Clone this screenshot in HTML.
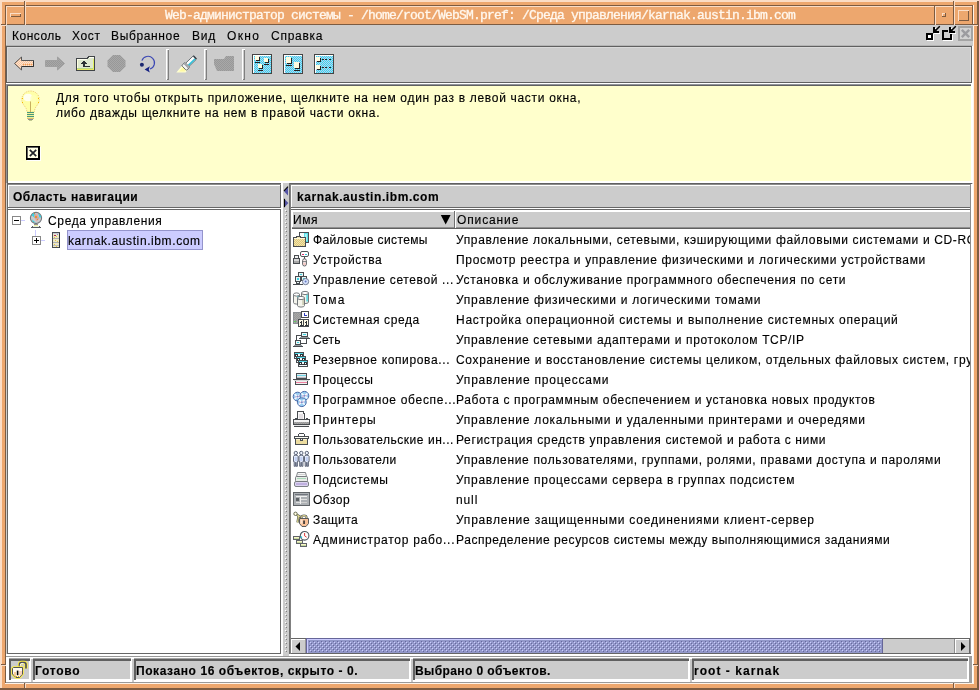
<!DOCTYPE html>
<html><head><meta charset="utf-8"><title>WebSM</title>
<style>
html,body{margin:0;padding:0}
body{width:979px;height:690px;overflow:hidden;position:relative;background:#eda76e;font-family:"Liberation Sans", sans-serif;font-size:12px}
#w{position:absolute;left:0;top:0;width:979px;height:690px;overflow:hidden;will-change:transform;transform:translateZ(0)}
#w>div,#w>svg{position:absolute}
.title{text-align:center;font-family:"Liberation Mono", monospace;font-size:13px;letter-spacing:-0.8px;line-height:17px;color:#fffaf3;-webkit-text-stroke:0.35px #fff3e6;white-space:nowrap;overflow:hidden}
.t{white-space:pre;line-height:17px;height:17px;-webkit-text-stroke:0.14px #000;font-family:"Liberation Sans", sans-serif;font-size:12px}
</style></head><body><div id="w">
<div style="left:0px;top:0px;width:979px;height:690px;background:#eda76e;"></div><div style="left:0px;top:0px;width:979px;height:2px;background:#fbddc6;"></div><div style="left:0px;top:0px;width:2px;height:690px;background:#fbddc6;"></div><div style="left:0px;top:688px;width:979px;height:2px;background:#7c5b41;"></div><div style="left:977px;top:0px;width:2px;height:690px;background:#7c5b41;"></div><div style="left:977px;top:0px;width:2px;height:1px;background:#fbddc6;"></div><div style="left:5px;top:5px;width:969px;height:1px;background:#7c5b41;"></div><div style="left:5px;top:5px;width:1px;height:679px;background:#7c5b41;"></div><div style="left:5px;top:683px;width:969px;height:1px;background:#fff3e8;"></div><div style="left:973px;top:5px;width:1px;height:679px;background:#fff3e8;"></div><div style="left:1px;top:24px;width:5px;height:1px;background:#7c5b41;"></div><div style="left:1px;top:25px;width:5px;height:1px;background:#fbddc6;"></div><div style="left:973px;top:24px;width:5px;height:1px;background:#7c5b41;"></div><div style="left:973px;top:25px;width:5px;height:1px;background:#fbddc6;"></div><div style="left:1px;top:664px;width:5px;height:1px;background:#7c5b41;"></div><div style="left:1px;top:665px;width:5px;height:1px;background:#fbddc6;"></div><div style="left:973px;top:664px;width:5px;height:1px;background:#7c5b41;"></div><div style="left:973px;top:665px;width:5px;height:1px;background:#fbddc6;"></div><div style="left:24px;top:1px;width:1px;height:5px;background:#7c5b41;"></div><div style="left:25px;top:1px;width:1px;height:5px;background:#fbddc6;"></div><div style="left:24px;top:683px;width:1px;height:5px;background:#7c5b41;"></div><div style="left:25px;top:683px;width:1px;height:5px;background:#fbddc6;"></div><div style="left:953px;top:1px;width:1px;height:5px;background:#7c5b41;"></div><div style="left:954px;top:1px;width:1px;height:5px;background:#fbddc6;"></div><div style="left:953px;top:683px;width:1px;height:5px;background:#7c5b41;"></div><div style="left:954px;top:683px;width:1px;height:5px;background:#fbddc6;"></div><div style="left:6px;top:6px;width:967px;height:1px;background:#fbddc6;"></div><div style="left:6px;top:24px;width:967px;height:1px;background:#7c5b41;"></div><div style="left:6px;top:6px;width:1px;height:19px;background:#fbddc6;"></div><div style="left:24px;top:6px;width:1px;height:19px;background:#7c5b41;"></div><div style="left:10px;top:13px;width:11px;height:1px;background:#fbddc6;"></div><div style="left:10px;top:13px;width:1px;height:4px;background:#fbddc6;"></div><div style="left:11px;top:16px;width:10px;height:1px;background:#7c5b41;"></div><div style="left:20px;top:14px;width:1px;height:3px;background:#7c5b41;"></div><div style="left:25px;top:6px;width:1px;height:19px;background:#fbddc6;"></div><div style="left:934px;top:6px;width:1px;height:19px;background:#7c5b41;"></div><div style="left:935px;top:6px;width:1px;height:19px;background:#fbddc6;"></div><div style="left:953px;top:6px;width:1px;height:19px;background:#7c5b41;"></div><div style="left:942px;top:13px;width:4px;height:1px;background:#fbddc6;"></div><div style="left:942px;top:13px;width:1px;height:4px;background:#fbddc6;"></div><div style="left:942px;top:16px;width:4px;height:1px;background:#7c5b41;"></div><div style="left:945px;top:13px;width:1px;height:4px;background:#7c5b41;"></div><div style="left:954px;top:6px;width:1px;height:19px;background:#fbddc6;"></div><div style="left:972px;top:6px;width:1px;height:19px;background:#7c5b41;"></div><div style="left:958px;top:10px;width:11px;height:1px;background:#fbddc6;"></div><div style="left:958px;top:10px;width:1px;height:11px;background:#fbddc6;"></div><div style="left:959px;top:20px;width:10px;height:1px;background:#7c5b41;"></div><div style="left:968px;top:11px;width:1px;height:10px;background:#7c5b41;"></div><div class="title" style="left:26px;top:7px;width:908px;height:17px">Web-администратор системы - /home/root/WebSM.pref: /Среда управления/karnak.austin.ibm.com</div><div style="left:6px;top:25px;width:967px;height:658px;background:#cccccc;"></div><div style="left:6px;top:45px;width:966px;height:1px;background:#b4b4b4;"></div><div style="left:6px;top:46px;width:966px;height:1px;background:#606060;"></div><div style="left:6px;top:25px;width:1px;height:20px;background:#d8d8d8;"></div><div class="t" style="left:12px;top:28px;font-weight:normal;color:#000;letter-spacing:0.501px;">Консоль</div><div class="t" style="left:72px;top:28px;font-weight:normal;color:#000;letter-spacing:0.663px;">Хост</div><div class="t" style="left:111px;top:28px;font-weight:normal;color:#000;letter-spacing:0.639px;">Выбранное</div><div class="t" style="left:192px;top:28px;font-weight:normal;color:#000;letter-spacing:0.827px;">Вид</div><div class="t" style="left:227px;top:28px;font-weight:normal;color:#000;letter-spacing:1.327px;">Окно</div><div class="t" style="left:271px;top:28px;font-weight:normal;color:#000;letter-spacing:0.732px;">Справка</div><svg style="left:920px;top:25px" width="54" height="20" viewBox="920 25 54 20" ><g shape-rendering="crispEdges"><rect x="927" y="34" width="7" height="7" fill="#fff"/><rect x="926" y="33" width="7" height="7" fill="#000"/><rect x="928" y="35" width="3" height="3" fill="#fff"/><rect x="943" y="40" width="10" height="1" fill="#fff"/><rect x="952" y="35" width="1" height="6" fill="#fff"/><rect x="942" y="30" width="6" height="2" fill="#000"/><rect x="942" y="30" width="2" height="10" fill="#000"/><rect x="942" y="38" width="10" height="2" fill="#000"/><rect x="950" y="34" width="2" height="6" fill="#000"/><rect x="934" y="33" width="6" height="1" fill="#fff"/><rect x="935" y="28" width="1" height="1" fill="#fff"/><rect x="933" y="27" width="2" height="6" fill="#000"/><rect x="933" y="31" width="6" height="2" fill="#000"/><rect x="935" y="29" width="1" height="2" fill="#606060"/><rect x="936" y="30" width="1" height="1" fill="#606060"/><rect x="950" y="33" width="6" height="1" fill="#fff"/><rect x="951" y="28" width="1" height="1" fill="#fff"/><rect x="949" y="27" width="2" height="6" fill="#000"/><rect x="949" y="31" width="6" height="2" fill="#000"/><rect x="951" y="29" width="1" height="2" fill="#606060"/><rect x="952" y="30" width="1" height="1" fill="#606060"/></g><path d="M935 31 L939.8 26.2" stroke="#000" stroke-width="1.5"/><path d="M951 31 L955.8 26.2" stroke="#000" stroke-width="1.5"/><g shape-rendering="crispEdges"><rect x="958" y="26" width="15" height="15" fill="#a4a4a4"/><rect x="960" y="28" width="11" height="11" fill="#d2d2d2"/></g><path d="M961.8 29.8 L969.2 37.2 M969.2 29.8 L961.8 37.2" stroke="#9c9ca0" stroke-width="2.4"/></svg><div style="left:6px;top:47px;width:1px;height:36px;background:#606060;"></div><div style="left:7px;top:47px;width:964px;height:1px;background:#dadada;"></div><div style="left:7px;top:48px;width:1px;height:34px;background:#dadada;"></div><div style="left:970px;top:48px;width:1px;height:34px;background:#dadada;"></div><div style="left:971px;top:47px;width:1px;height:36px;background:#606060;"></div><div style="left:972px;top:46px;width:1px;height:38px;background:#ffffff;"></div><div style="left:7px;top:82px;width:965px;height:1px;background:#606060;"></div><div style="left:6px;top:83px;width:967px;height:1px;background:#ffffff;"></div><div style="left:166px;top:49px;width:1px;height:31px;background:#ffffff;"></div><div style="left:166px;top:49px;width:3px;height:1px;background:#ffffff;"></div><div style="left:168px;top:50px;width:1px;height:30px;background:#808080;"></div><div style="left:167px;top:79px;width:2px;height:1px;background:#808080;"></div><div style="left:204px;top:49px;width:1px;height:31px;background:#ffffff;"></div><div style="left:204px;top:49px;width:3px;height:1px;background:#ffffff;"></div><div style="left:206px;top:50px;width:1px;height:30px;background:#808080;"></div><div style="left:205px;top:79px;width:2px;height:1px;background:#808080;"></div><div style="left:242px;top:49px;width:1px;height:31px;background:#ffffff;"></div><div style="left:242px;top:49px;width:3px;height:1px;background:#ffffff;"></div><div style="left:244px;top:50px;width:1px;height:30px;background:#808080;"></div><div style="left:243px;top:79px;width:2px;height:1px;background:#808080;"></div><svg style="left:6px;top:47px" width="340" height="35" viewBox="6 47 340 35" ><defs>
<pattern id="dCy" width="2" height="2" patternUnits="userSpaceOnUse"><rect width="2" height="2" fill="#c4c8f0"/><rect width="1" height="1" fill="#2ce0ee"/><rect x="1" y="1" width="1" height="1" fill="#2ce0ee"/></pattern>
<pattern id="dGr" width="2" height="2" patternUnits="userSpaceOnUse"><rect width="2" height="2" fill="#a8a8a8"/><rect width="1" height="1" fill="#989898"/><rect x="1" y="1" width="1" height="1" fill="#989898"/></pattern>
<pattern id="dPe" width="2" height="2" patternUnits="userSpaceOnUse"><rect width="2" height="2" fill="#fde3cf"/><rect width="1" height="1" fill="#f8c49c"/><rect x="1" y="1" width="1" height="1" fill="#f8c49c"/></pattern>
<pattern id="dTh" width="4" height="4" patternUnits="userSpaceOnUse"><rect width="4" height="4" fill="#9399ca"/><rect x="0" y="0" width="1" height="1" fill="#ccccff"/><rect x="2" y="2" width="1" height="1" fill="#ccccff"/><rect x="1" y="1" width="1" height="1" fill="#6868a0"/><rect x="3" y="3" width="1" height="1" fill="#6868a0"/></pattern>
<pattern id="dFo" width="2" height="2" patternUnits="userSpaceOnUse"><rect width="2" height="2" fill="#f0e4b0"/><rect width="1" height="1" fill="#e0c878"/><rect x="1" y="1" width="1" height="1" fill="#e0c878"/></pattern>
</defs><path d="M14.5 63.5 L21.5 57 V60.5 H33.5 V66.5 H21.5 V70 Z" fill="url(#dPe)" stroke="#555" stroke-width="1" stroke-linejoin="miter"/><path d="M22 66.5 H33.5 V60.5" fill="none" stroke="#333" stroke-width="1"/><path d="M23 64.5 H32" stroke="#f59a4a" stroke-width="1" stroke-dasharray="1 1"/><path d="M64.5 63.5 L57.5 57 V60.5 H45.5 V66.5 H57.5 V70 Z" fill="url(#dGr)" stroke="#a0a0a0" stroke-width="1"/><g shape-rendering="crispEdges"><path d="M76 58 H86 L88 56 H95 V71 H76 Z" fill="#404448"/><path d="M77 59 H87 L89 57 H94 V70 H77 Z" fill="#dfe8d0"/><rect x="77" y="59" width="1" height="10" fill="#ffffe0"/><rect x="77" y="59" width="10" height="1" fill="#fffff0"/><rect x="89" y="57" width="5" height="1" fill="#fffff0"/><rect x="77" y="68" width="17" height="1" fill="#b8d888"/><rect x="77" y="69" width="17" height="1" fill="#e8e860"/><rect x="93" y="59" width="1" height="10" fill="#e0f060"/><rect x="83" y="61" width="2" height="6" fill="#2c3034"/><rect x="83" y="66" width="7" height="1" fill="#2c3034"/><rect x="82" y="62" width="4" height="1" fill="#2c3034"/><rect x="81" y="63" width="6" height="1" fill="#2c3034"/></g><path d="M113 55 H120 L125.5 60.5 V66.5 L120 72 H113 L107.5 66.5 V60.5 Z" fill="url(#dGr)"/><path d="M141.9 60.6 A6.5 6.5 0 1 1 150 69" fill="none" stroke="#3c48b4" stroke-width="1.15"/><path d="M144.6 69.4 L149.8 66.2 L148.8 69.4 L149.800 72.6 Z" fill="#182484"/><circle cx="141.9" cy="64.8" r="2" fill="#1c2870"/><path d="M176.3 72.5 L182.6 65 L187.6 69.8 L185.6 72.5 Z" fill="#ffffd0"/><path d="M179 71.5 L183.5 66.5 L186 69.5 L184.5 71.5 Z" fill="#fff890" opacity="0.7"/><g transform="rotate(-44 184 68)"><rect x="188" y="65.7" width="11.6" height="4.6" rx="0.8" fill="#fcfcfc" stroke="#50585c" stroke-width="0.8"/><rect x="189" y="68.300" width="9.4" height="1.7" fill="#38c0d8"/><rect x="198.4" y="66" width="1.4" height="4" fill="#384048"/><rect x="184" y="64.6" width="4.6" height="6.8" rx="0.9" fill="#f4f4f4" stroke="#50585c" stroke-width="0.8"/><rect x="186.6" y="65" width="1.2" height="6" fill="#909498"/></g><path d="M214 59 H224 L226 56 H234 V71 H217 L214 64 Z" fill="url(#dGr)"/><g shape-rendering="crispEdges"><rect x="252" y="54" width="20" height="20" fill="#444"/><rect x="253" y="55" width="18" height="18" fill="url(#dCy)"/><rect x="253" y="55" width="18" height="1" fill="#fff"/><rect x="253" y="55" width="1" height="18" fill="#fff"/></g><g shape-rendering="crispEdges"><rect x="283" y="54" width="20" height="20" fill="#444"/><rect x="284" y="55" width="18" height="18" fill="url(#dCy)"/><rect x="284" y="55" width="18" height="1" fill="#fff"/><rect x="284" y="55" width="1" height="18" fill="#fff"/></g><g shape-rendering="crispEdges"><rect x="314" y="54" width="20" height="20" fill="#444"/><rect x="315" y="55" width="18" height="18" fill="url(#dCy)"/><rect x="315" y="55" width="18" height="1" fill="#fff"/><rect x="315" y="55" width="1" height="18" fill="#fff"/></g><g shape-rendering="crispEdges"><rect x="256" y="57" width="4" height="4" fill="#222"/><rect x="255" y="56" width="4" height="4" fill="#fffce0"/><rect x="255" y="62" width="5" height="1" fill="#222"/><rect x="265" y="59" width="4" height="4" fill="#222"/><rect x="264" y="58" width="4" height="4" fill="#fffce0"/><rect x="264" y="64" width="5" height="1" fill="#222"/><rect x="259" y="65" width="4" height="4" fill="#222"/><rect x="258" y="64" width="4" height="4" fill="#fffce0"/><rect x="258" y="70" width="5" height="1" fill="#222"/><rect x="287" y="58" width="5" height="6" fill="#222"/><rect x="286" y="57" width="5" height="6" fill="#fffce0"/><rect x="286" y="65" width="6" height="1" fill="#222"/><rect x="295" y="63" width="5" height="6" fill="#222"/><rect x="294" y="62" width="5" height="6" fill="#fffce0"/><rect x="294" y="70" width="6" height="1" fill="#222"/><rect x="317" y="58" width="4" height="4" fill="#222"/><rect x="316" y="57" width="4" height="4" fill="#fffce0"/><rect x="317" y="66" width="4" height="4" fill="#222"/><rect x="316" y="65" width="4" height="4" fill="#fffce0"/><rect x="322" y="59" width="2" height="1" fill="#222"/><rect x="325" y="59" width="2" height="1" fill="#222"/><rect x="329" y="59" width="2" height="1" fill="#222"/><rect x="322" y="67" width="2" height="1" fill="#222"/><rect x="325" y="67" width="2" height="1" fill="#222"/><rect x="329" y="67" width="2" height="1" fill="#222"/></g></svg><div style="left:6px;top:84px;width:965px;height:1px;background:#909498;"></div><div style="left:6px;top:84px;width:1px;height:99px;background:#909498;"></div><div style="left:7px;top:85px;width:964px;height:1px;background:#606060;"></div><div style="left:7px;top:85px;width:1px;height:98px;background:#606060;"></div><div style="left:8px;top:86px;width:963px;height:95px;background:#ffffcc;"></div><div style="left:8px;top:181px;width:965px;height:2px;background:#ffffff;"></div><div style="left:971px;top:84px;width:2px;height:99px;background:#ffffff;"></div><svg style="left:18px;top:88px" width="26" height="36" viewBox="18 88 26 36" ><path d="M30.5 91 C35.5 91 39.3 94.8 39.3 99.5 C39.3 103.5 36.5 105.5 35 108.5 L34.2 112 H27 L26.2 108.5 C24.5 105.5 21.8 103.5 21.8 99.5 C21.8 94.8 25.5 91 30.5 91 Z" fill="#ffffa8" stroke="#ecc878" stroke-width="0.9" stroke-dasharray="1.2 1"/><ellipse cx="28" cy="97.5" rx="4.4" ry="3.8" fill="#fffff0"/><ellipse cx="33.5" cy="99" rx="3.2" ry="4" fill="#ffffb8" opacity="0.8"/><rect x="30" y="101.5" width="1" height="10.5" fill="#c8b060"/><rect x="22" y="98" width="1" height="1" fill="#f8b800"/><rect x="22" y="102" width="1" height="1" fill="#f8b800"/><rect x="38" y="98" width="1" height="1" fill="#f8b800"/><rect x="38" y="102" width="1" height="1" fill="#f8b800"/><g shape-rendering="crispEdges"><rect x="27" y="112" width="7" height="7" fill="#f0f098"/><rect x="27" y="112" width="7" height="1" fill="#48987c"/><rect x="27" y="114" width="7" height="1" fill="#48987c"/><rect x="27" y="116" width="7" height="1" fill="#48987c"/><rect x="27" y="118" width="7" height="1" fill="#d8c070"/><rect x="28" y="119" width="5" height="1" fill="#8c8c94"/><rect x="29" y="120" width="3" height="1" fill="#c0c890"/></g></svg><svg style="left:24px;top:144px" width="20" height="20" viewBox="24 144 20 20" ><g shape-rendering="crispEdges"><rect x="27" y="147" width="14" height="14" fill="#fff"/><rect x="26" y="146" width="14" height="14" fill="#000"/><rect x="27" y="147" width="11" height="11" fill="#ffffe4"/><rect x="27" y="147" width="11" height="1" fill="#606060"/><rect x="27" y="147" width="1" height="11" fill="#606060"/></g><path d="M29.8 149.8 L36.2 156.2 M36.2 149.8 L29.8 156.2" stroke="#202428" stroke-width="1.7"/></svg><div class="t" style="left:56px;top:90px;font-weight:normal;color:#000;letter-spacing:0.69px;">Для того чтобы открыть приложение, щелкните на нем один раз в левой части окна,</div><div class="t" style="left:56px;top:105px;font-weight:normal;color:#000;letter-spacing:0.681px;">либо дважды щелкните на нем в правой части окна.</div><div style="left:7px;top:183px;width:275px;height:1px;background:#606060;"></div><div style="left:7px;top:184px;width:275px;height:1px;background:#8c8c8c;"></div><div style="left:7px;top:183px;width:1px;height:471px;background:#666666;"></div><div style="left:8px;top:185px;width:273px;height:1px;background:#ffffff;"></div><div style="left:8px;top:185px;width:1px;height:22px;background:#ffffff;"></div><div style="left:280px;top:185px;width:1px;height:469px;background:#666666;"></div><div style="left:281px;top:183px;width:2px;height:473px;background:#ffffff;"></div><div style="left:8px;top:207px;width:273px;height:1px;background:#666666;"></div><div style="left:8px;top:208px;width:273px;height:1px;background:#ffffff;"></div><div style="left:8px;top:209px;width:272px;height:1px;background:#666666;"></div><div style="left:8px;top:210px;width:272px;height:443px;background:#ffffff;"></div><div style="left:7px;top:653px;width:274px;height:1px;background:#666666;"></div><div style="left:6px;top:654px;width:967px;height:2px;background:#ffffff;"></div><div class="t" style="left:13px;top:189px;font-weight:bold;color:#000;letter-spacing:0.513px;">Область навигации</div><svg style="left:10px;top:210px" width="54" height="40" viewBox="10 210 54 40" ><g shape-rendering="crispEdges"><rect x="21" y="220" width="4" height="1" fill="#ccccff"/><rect x="35" y="230" width="1" height="6" fill="#ccccff"/><rect x="41" y="240" width="4" height="1" fill="#ccccff"/><rect x="12" y="216" width="9" height="9" fill="#888"/><rect x="13" y="217" width="7" height="7" fill="#fff"/><rect x="14" y="220" width="5" height="1" fill="#000"/><rect x="32" y="236" width="9" height="9" fill="#888"/><rect x="33" y="237" width="7" height="7" fill="#fff"/><rect x="34" y="240" width="5" height="1" fill="#000"/><rect x="36" y="238" width="1" height="5" fill="#000"/></g><circle cx="36" cy="218" r="5.6" fill="#cccacc" stroke="#74787c" stroke-width="1.1"/><path d="M31.5 215 L34 213 L39 218 L37.5 220.5 Z" fill="#20d8e8"/><path d="M38 213.5 L41 216 L40 218.5 Z" fill="#20d8e8"/><path d="M32 219 L34 221.5 L36.5 222.5 L33 222 Z" fill="#20d8e8"/><path d="M33.5 214.5 L37.5 214 L39.5 218.5 L36.5 221.5 L34.5 218 Z" fill="#f0a098" opacity="0.8"/><rect x="35" y="216" width="2" height="2" fill="#f09030"/><rect x="37" y="219" width="1" height="1" fill="#f09030"/><rect x="34" y="213" width="1" height="1" fill="#e08030"/><g shape-rendering="crispEdges"><rect x="34" y="224" width="4" height="2" fill="#f0f0a0"/><rect x="34" y="224" width="4" height="1" fill="#909090"/><rect x="33" y="226" width="6" height="1" fill="#e8f0e0"/><rect x="32" y="226" width="1" height="1" fill="#606060"/><rect x="39" y="226" width="1" height="1" fill="#606060"/><rect x="31" y="227" width="10" height="1" fill="#585c60"/></g><g shape-rendering="crispEdges"><rect x="52" y="232" width="8" height="16" fill="#484c50"/><rect x="53" y="233" width="6" height="14" fill="#ece8c8"/><rect x="53" y="233" width="6" height="1" fill="#c8c8d8"/><rect x="53" y="238" width="6" height="1" fill="#b0b0b0"/><rect x="53" y="242" width="6" height="1" fill="#b0b0b0"/><rect x="53" y="245" width="6" height="1" fill="#c0c0c0"/><rect x="54" y="235" width="2" height="1" fill="#b02858"/><rect x="57" y="234" width="1" height="1" fill="#8888d0"/><rect x="54" y="237" width="1" height="1" fill="#e8c840"/><rect x="56" y="236" width="1" height="1" fill="#e8c840"/><rect x="55" y="240" width="1" height="1" fill="#e8c840"/><rect x="57" y="241" width="1" height="1" fill="#e8c840"/><rect x="54" y="244" width="1" height="1" fill="#e8c840"/><rect x="56" y="246" width="1" height="1" fill="#e8c840"/><rect x="59" y="233" width="1" height="15" fill="#303438"/></g></svg><div class="t" style="left:48px;top:213px;font-weight:normal;color:#000;letter-spacing:0.643px;">Среда управления</div><div style="left:67px;top:230px;width:136px;height:20px;background:#9494cc;"></div><div style="left:68px;top:231px;width:134px;height:18px;background:#ccccff;"></div><div class="t" style="left:68px;top:233px;font-weight:normal;color:#000;letter-spacing:0.598px;">karnak.austin.ibm.com</div><svg style="left:283px;top:183px" width="6" height="473" viewBox="283 183 6 473" ><g shape-rendering="crispEdges"><rect x="283" y="183" width="6" height="473" fill="#cccccc"/><defs><pattern id="dv" x="285" y="210" width="6" height="4" patternUnits="userSpaceOnUse"><rect x="0" y="0" width="1" height="1" fill="#fff"/><rect x="1" y="1" width="1" height="1" fill="#808080"/></pattern></defs><rect x="285" y="210" width="2" height="444" fill="url(#dv)"/></g><path d="M288 187 V195.4 L284 191.2 Z" fill="#5454a4"/><path d="M288 186.6 L284 190.8" stroke="#000" stroke-width="1.1"/><path d="M284.4 199 V207.2 L288.4 203.1 Z" fill="#5454a4"/><path d="M284.500 198.8 V207.2" stroke="#000" stroke-width="1.1"/></svg><div style="left:289px;top:183px;width:683px;height:1px;background:#606060;"></div><div style="left:289px;top:184px;width:682px;height:1px;background:#8c8c8c;"></div><div style="left:289px;top:183px;width:1px;height:471px;background:#707070;"></div><div style="left:290px;top:184px;width:1px;height:470px;background:#808080;"></div><div style="left:291px;top:185px;width:680px;height:1px;background:#ffffff;"></div><div style="left:291px;top:185px;width:1px;height:22px;background:#ffffff;"></div><div style="left:970px;top:185px;width:1px;height:469px;background:#8c8c8c;"></div><div style="left:971px;top:184px;width:2px;height:472px;background:#ffffff;"></div><div style="left:291px;top:207px;width:679px;height:1px;background:#666666;"></div><div style="left:291px;top:208px;width:679px;height:1px;background:#ffffff;"></div><div style="left:291px;top:209px;width:679px;height:1px;background:#666666;"></div><div style="left:291px;top:210px;width:679px;height:428px;background:#ffffff;"></div><div class="t" style="left:297px;top:189px;font-weight:bold;color:#000;letter-spacing:0.579px;">karnak.austin.ibm.com</div><div style="left:293px;top:212px;width:677px;height:15px;background:#cccccc;"></div><div style="left:292px;top:227px;width:678px;height:1px;background:#909090;"></div><div style="left:292px;top:228px;width:678px;height:1px;background:#606060;"></div><div style="left:454px;top:211px;width:1px;height:17px;background:#707070;"></div><div style="left:455px;top:211px;width:1px;height:17px;background:#ffffff;"></div><div class="t" style="left:293px;top:212px;font-weight:normal;color:#000;letter-spacing:0.608px;">Имя</div><div class="t" style="left:457px;top:212px;font-weight:normal;color:#000;letter-spacing:0.873px;">Описание</div><svg style="left:440px;top:214px" width="13" height="12"><path d="M0.800 1h9.8l-4.9 9.4z" fill="#000"/></svg><div class="t" style="left:313px;top:232px;font-weight:normal;color:#000;letter-spacing:0.366px;">Файловые системы</div><div class="t" style="left:456px;top:232px;font-weight:normal;color:#000;letter-spacing:0.635px;width:514px;overflow:hidden;">Управление локальными, сетевыми, кэширующими файловыми системами и CD-ROM</div><svg style="left:292px;top:230px" width="19" height="20" viewBox="-1 -2 19 20"><g shape-rendering="crispEdges"><rect x="6" y="0" width="10" height="11" fill="#484c50"/><rect x="7" y="1" width="8" height="9" fill="#f4fcfc"/><rect x="11" y="1" width="4" height="9" fill="#58e0e8"/><rect x="12" y="2" width="2" height="7" fill="#a8f0f4"/><rect x="0" y="5" width="13" height="10" fill="#484c50"/><rect x="3" y="4" width="5" height="1" fill="#484c50"/><rect x="1" y="6" width="11" height="8" fill="url(#dFo)"/><rect x="4" y="5" width="3" height="1" fill="#f0e4b0"/><rect x="1" y="6" width="11" height="1" fill="#fff8d8"/></g></svg><div class="t" style="left:313px;top:252px;font-weight:normal;color:#000;letter-spacing:0.662px;">Устройства</div><div class="t" style="left:456px;top:252px;font-weight:normal;color:#000;letter-spacing:0.674px;">Просмотр реестра и управление физическими и логическими устройствами</div><svg style="left:292px;top:250px" width="19" height="20" viewBox="-1 -2 19 20"><rect x="7.5" y="-0.5" width="8" height="5" rx="1.5" fill="#fff" stroke="#505458" stroke-width="1"/><g shape-rendering="crispEdges"><rect x="9" y="2" width="2" height="1" fill="#e03070"/><rect x="12" y="2" width="2" height="1" fill="#30c8d8"/><rect x="1" y="3" width="5" height="4" fill="#484c50"/><rect x="2" y="4" width="3" height="3" fill="#f0f0f0"/><rect x="0" y="6" width="7" height="6" fill="#484c50"/><rect x="1" y="7" width="5" height="2" fill="#d8d8d8"/><rect x="1" y="9" width="5" height="2" fill="#a8a8a8"/><rect x="11" y="5" width="1" height="2" fill="#484c50"/></g><rect x="9.6" y="6.8" width="3.8" height="7.2" rx="1.9" fill="#fdeeee" stroke="#505458" stroke-width="0.9"/><path d="M9.8 9.6 H13.2" stroke="#505458" stroke-width="0.7"/><rect x="10.5" y="11" width="2" height="2" fill="#f8b8b0" opacity="0.7"/></svg><div class="t" style="left:313px;top:272px;font-weight:normal;color:#000;letter-spacing:0.618px;">Управление сетевой ...</div><div class="t" style="left:456px;top:272px;font-weight:normal;color:#000;letter-spacing:0.687px;">Установка и обслуживание программного обеспечения по сети</div><svg style="left:292px;top:270px" width="19" height="20" viewBox="-1 -2 19 20"><g shape-rendering="crispEdges"><rect x="5" y="0" width="6" height="5" fill="#484c50"/><rect x="6" y="1" width="4" height="3" fill="#e8f4f4"/><rect x="7" y="2" width="2" height="1" fill="#40d0e0"/><rect x="2" y="4" width="6" height="6" fill="#484c50"/><rect x="3" y="5" width="4" height="4" fill="#e8f4f4"/><rect x="4" y="6" width="2" height="2" fill="#40d0e0"/><rect x="8" y="4" width="6" height="5" fill="#484c50"/><rect x="9" y="5" width="4" height="3" fill="#e8f4f4"/><rect x="10" y="6" width="2" height="1" fill="#40d0e0"/><rect x="3" y="10" width="4" height="2" fill="#484c50"/><rect x="4" y="10" width="2" height="1" fill="#e8f4f4"/><rect x="0" y="12" width="10" height="1" fill="#484c50"/></g><circle cx="12.6" cy="9.6" r="3.1" fill="#d8e4fc" stroke="#687088" stroke-width="0.9"/><circle cx="12.6" cy="9.6" r="1" fill="#6878c0"/></svg><div class="t" style="left:313px;top:292px;font-weight:normal;color:#000;letter-spacing:1.15px;">Тома</div><div class="t" style="left:456px;top:292px;font-weight:normal;color:#000;letter-spacing:0.726px;">Управление физическими и логическими томами</div><svg style="left:292px;top:290px" width="19" height="20" viewBox="-1 -2 19 20"><path d="M0.5 2.5 V10.5 A3.0 1.6 0 0 0 6.5 10.5 V2.5 Z" fill="#f4f4ec" stroke="#686c70" stroke-width="0.9"/><rect x="4.3" y="3" width="1.6" height="7" fill="#58d8e0"/><ellipse cx="3.5" cy="2.5" rx="3.0" ry="1.6" fill="#fff" stroke="#686c70" stroke-width="0.9"/><path d="M8.5 1.0 V10.0 A3.5 1.6 0 0 0 15.5 10.0 V1.0 Z" fill="#f4f4ec" stroke="#686c70" stroke-width="0.9"/><rect x="13.3" y="1.5" width="1.6" height="8" fill="#58d8e0"/><ellipse cx="12.0" cy="1.0" rx="3.5" ry="1.6" fill="#fff" stroke="#686c70" stroke-width="0.9"/><path d="M4.5 6.0 V13.5 A3.5 1.6 0 0 0 11.5 13.5 V6.0 Z" fill="#f4f4ec" stroke="#686c70" stroke-width="0.9"/><rect x="9.3" y="6.5" width="1.6" height="6.5" fill="#c8c8b0"/><ellipse cx="8.0" cy="6.0" rx="3.5" ry="1.6" fill="#fff" stroke="#686c70" stroke-width="0.9"/></svg><div class="t" style="left:313px;top:312px;font-weight:normal;color:#000;letter-spacing:0.624px;">Системная среда</div><div class="t" style="left:456px;top:312px;font-weight:normal;color:#000;letter-spacing:0.761px;">Настройка операционной системы и выполнение системных операций</div><svg style="left:292px;top:310px" width="19" height="20" viewBox="-1 -2 19 20"><g shape-rendering="crispEdges"><rect x="0" y="0" width="8" height="12" fill="#8c9094"/><rect x="1" y="1" width="6" height="10" fill="url(#dGr)"/><rect x="1" y="9" width="2" height="1" fill="#60d060"/><rect x="8" y="-1" width="8" height="7" fill="#484c50"/><rect x="9" y="0" width="6" height="5" fill="#fff"/><rect x="11" y="1" width="1" height="3" fill="#3040c0"/><rect x="11" y="3" width="3" height="1" fill="#3040c0"/><rect x="5" y="7" width="11" height="8" fill="#484c50"/><rect x="6" y="8" width="9" height="6" fill="#fffce8"/><rect x="10" y="8" width="1" height="6" fill="#484c50"/><rect x="8" y="9" width="1" height="4" fill="#303438"/><rect x="7" y="10" width="1" height="1" fill="#303438"/><rect x="7" y="13" width="3" height="1" fill="#303438"/><rect x="13" y="9" width="1" height="4" fill="#303438"/><rect x="12" y="10" width="1" height="1" fill="#303438"/><rect x="12" y="13" width="3" height="1" fill="#303438"/></g></svg><div class="t" style="left:313px;top:332px;font-weight:normal;color:#000;letter-spacing:0.299px;">Сеть</div><div class="t" style="left:456px;top:332px;font-weight:normal;color:#000;letter-spacing:0.662px;">Управление сетевыми адаптерами и протоколом TCP/IP</div><svg style="left:292px;top:330px" width="19" height="20" viewBox="-1 -2 19 20"><g shape-rendering="crispEdges"><rect x="3" y="3" width="1" height="5" fill="#484c50"/><rect x="3" y="3" width="5" height="1" fill="#484c50"/><rect x="13" y="6" width="1" height="6" fill="#484c50"/><rect x="8" y="11" width="6" height="1" fill="#484c50"/><rect x="8" y="0" width="7" height="5" fill="#484c50"/><rect x="9" y="1" width="5" height="3" fill="#e8f8f8"/><rect x="10" y="2" width="3" height="1" fill="#40d0e0"/><rect x="6" y="6" width="11" height="1" fill="#484c50"/><rect x="7" y="5" width="9" height="1" fill="#90989c"/><rect x="2" y="8" width="6" height="5" fill="#484c50"/><rect x="3" y="9" width="4" height="3" fill="#e8f8f8"/><rect x="4" y="10" width="2" height="1" fill="#40d0e0"/><rect x="0" y="14" width="10" height="1" fill="#484c50"/><rect x="1" y="13" width="8" height="1" fill="#90989c"/></g></svg><div class="t" style="left:313px;top:352px;font-weight:normal;color:#000;letter-spacing:0.637px;">Резервное копирова...</div><div class="t" style="left:456px;top:352px;font-weight:normal;color:#000;letter-spacing:0.68px;width:514px;overflow:hidden;">Сохранение и восстановление системы целиком, отдельных файловых систем, групп томов</div><svg style="left:292px;top:350px" width="19" height="20" viewBox="-1 -2 19 20"><g shape-rendering="crispEdges"><rect x="1" y="0" width="10" height="7" fill="#484c50"/><rect x="2" y="1" width="8" height="5" fill="#f4f8fc"/><rect x="2" y="1" width="8" height="1" fill="#50d8e8"/><rect x="2" y="2" width="3" height="3" fill="#303438"/><rect x="3" y="3" width="1" height="1" fill="#fff"/><rect x="7" y="2" width="3" height="3" fill="#303438"/><rect x="8" y="3" width="1" height="1" fill="#fff"/><rect x="5" y="4" width="2" height="1" fill="#303438"/><rect x="3" y="4" width="10" height="7" fill="#484c50"/><rect x="4" y="5" width="8" height="5" fill="#f4f8fc"/><rect x="4" y="5" width="8" height="1" fill="#50d8e8"/><rect x="4" y="6" width="3" height="3" fill="#303438"/><rect x="5" y="7" width="1" height="1" fill="#fff"/><rect x="9" y="6" width="3" height="3" fill="#303438"/><rect x="10" y="7" width="1" height="1" fill="#fff"/><rect x="7" y="8" width="2" height="1" fill="#303438"/><rect x="5" y="8" width="10" height="7" fill="#484c50"/><rect x="6" y="9" width="8" height="5" fill="#f4f8fc"/><rect x="6" y="9" width="8" height="1" fill="#50d8e8"/><rect x="6" y="10" width="3" height="3" fill="#303438"/><rect x="7" y="11" width="1" height="1" fill="#fff"/><rect x="11" y="10" width="3" height="3" fill="#303438"/><rect x="12" y="11" width="1" height="1" fill="#fff"/><rect x="9" y="12" width="2" height="1" fill="#303438"/></g></svg><div class="t" style="left:313px;top:372px;font-weight:normal;color:#000;letter-spacing:0.548px;">Процессы</div><div class="t" style="left:456px;top:372px;font-weight:normal;color:#000;letter-spacing:0.774px;">Управление процессами</div><svg style="left:292px;top:370px" width="19" height="20" viewBox="-1 -2 19 20"><g shape-rendering="crispEdges"><rect x="3" y="1" width="11" height="6" fill="#484c50"/><rect x="4" y="2" width="9" height="4" fill="#e4e8ec"/><rect x="4" y="3" width="9" height="1" fill="#70d8e8"/><rect x="4" y="5" width="9" height="1" fill="#b8bcc0"/><rect x="0" y="7" width="17" height="1" fill="#484c50"/><rect x="1" y="8" width="15" height="1" fill="#d8d8d8"/><rect x="2" y="9" width="13" height="4" fill="#484c50"/><rect x="3" y="9" width="11" height="3" fill="#f0f0f0"/><rect x="3" y="10" width="11" height="1" fill="#f080a0"/></g></svg><div class="t" style="left:313px;top:392px;font-weight:normal;color:#000;letter-spacing:0.687px;">Программное обеспе...</div><div class="t" style="left:456px;top:392px;font-weight:normal;color:#000;letter-spacing:0.651px;">Работа с программным обеспечением и установка новых продуктов</div><svg style="left:292px;top:390px" width="19" height="20" viewBox="-1 -2 19 20"><circle cx="4.6" cy="4.6" r="4.4" fill="#98ccf0" stroke="#4868a8" stroke-width="1"/><path d="M1.5999999999999996 2.0999999999999996 L7.6 7.1 M1.5999999999999996 7.1 L7.6 2.0999999999999996" stroke="#f4f8ff" stroke-width="1.6"/><path d="M2.0999999999999996 5.1 L7.1 4.1" stroke="#e8b8d8" stroke-width="1"/><circle cx="4.6" cy="4.6" r="1" fill="#7890c8"/><circle cx="11.4" cy="3.8" r="4.4" fill="#98ccf0" stroke="#4868a8" stroke-width="1"/><path d="M8.4 1.2999999999999998 L14.4 6.3 M8.4 6.3 L14.4 1.2999999999999998" stroke="#f4f8ff" stroke-width="1.6"/><path d="M8.9 4.3 L13.9 3.3" stroke="#e8b8d8" stroke-width="1"/><circle cx="11.4" cy="3.8" r="1" fill="#7890c8"/><circle cx="8.8" cy="10.2" r="4.4" fill="#98ccf0" stroke="#4868a8" stroke-width="1"/><path d="M5.800000000000001 7.699999999999999 L11.8 12.7 M5.800000000000001 12.7 L11.8 7.699999999999999" stroke="#f4f8ff" stroke-width="1.6"/><path d="M6.300000000000001 10.7 L11.3 9.7" stroke="#e8b8d8" stroke-width="1"/><circle cx="8.8" cy="10.2" r="1" fill="#7890c8"/></svg><div class="t" style="left:313px;top:412px;font-weight:normal;color:#000;letter-spacing:0.966px;">Принтеры</div><div class="t" style="left:456px;top:412px;font-weight:normal;color:#000;letter-spacing:0.75px;">Управление локальными и удаленными принтерами и очередями</div><svg style="left:292px;top:410px" width="19" height="20" viewBox="-1 -2 19 20"><g shape-rendering="crispEdges"><rect x="4" y="-1" width="8" height="9" fill="#484c50"/><rect x="5" y="0" width="6" height="8" fill="#f8f8f8"/><rect x="6" y="2" width="4" height="5" fill="#e4e0e4"/><rect x="10" y="-1" width="2" height="2" fill="#fff"/><rect x="10" y="1" width="2" height="1" fill="#484c50"/><rect x="10" y="-1" width="1" height="2" fill="#484c50"/><rect x="0" y="7" width="17" height="6" fill="#484c50"/><rect x="1" y="8" width="15" height="2" fill="#f4f4f4"/><rect x="1" y="10" width="15" height="2" fill="url(#dGr)"/><rect x="2" y="6" width="2" height="1" fill="#484c50"/><rect x="13" y="6" width="2" height="1" fill="#484c50"/><rect x="1" y="13" width="15" height="1" fill="#e8e8e8"/><rect x="1" y="14" width="15" height="1" fill="#484c50"/></g></svg><div class="t" style="left:313px;top:432px;font-weight:normal;color:#000;letter-spacing:0.533px;">Пользовательские ин...</div><div class="t" style="left:456px;top:432px;font-weight:normal;color:#000;letter-spacing:0.641px;">Регистрация средств управления системой и работа с ними</div><svg style="left:292px;top:430px" width="19" height="20" viewBox="-1 -2 19 20"><g shape-rendering="crispEdges"><rect x="6" y="1" width="5" height="1" fill="#484c50"/><rect x="5" y="2" width="1" height="2" fill="#484c50"/><rect x="11" y="2" width="1" height="2" fill="#484c50"/><rect x="1" y="4" width="15" height="3" fill="#484c50"/><rect x="2" y="5" width="13" height="1" fill="#fcfcf4"/><rect x="2" y="7" width="13" height="6" fill="#484c50"/><rect x="3" y="7" width="11" height="5" fill="#ecdca0"/><rect x="3" y="7" width="11" height="1" fill="#f8f0d0"/><rect x="7" y="6" width="3" height="3" fill="#484c50"/><rect x="8" y="7" width="1" height="1" fill="#f0f0f0"/></g></svg><div class="t" style="left:313px;top:452px;font-weight:normal;color:#000;letter-spacing:0.448px;">Пользователи</div><div class="t" style="left:456px;top:452px;font-weight:normal;color:#000;letter-spacing:0.672px;">Управление пользователями, группами, ролями, правами доступа и паролями</div><svg style="left:292px;top:450px" width="19" height="20" viewBox="-1 -2 19 20"><circle cx="2.8" cy="1" r="1.7" fill="#eef4ff" stroke="#50586c" stroke-width="0.9"/><path d="M0.5 4.5 Q0.5 3.2 2.8 3.2 Q5.1 3.2 5.1 4.5 V9.5 H4.4 V14.3 H3.1999999999999997 V10.5 H2.4 V14.3 H1.1999999999999997 V9.5 H0.5 Z" fill="#e4ecfc" stroke="#50586c" stroke-width="0.9"/><rect x="1.7999999999999998" y="5" width="2" height="4" fill="#b8c8f0" opacity="0.8"/><circle cx="8.3" cy="1" r="1.7" fill="#eef4ff" stroke="#50586c" stroke-width="0.9"/><path d="M6.000000000000001 4.5 Q6.000000000000001 3.2 8.3 3.2 Q10.600000000000001 3.2 10.600000000000001 4.5 V9.5 H9.9 V14.3 H8.700000000000001 V10.5 H7.9 V14.3 H6.700000000000001 V9.5 H6.000000000000001 Z" fill="#e4ecfc" stroke="#50586c" stroke-width="0.9"/><rect x="7.300000000000001" y="5" width="2" height="4" fill="#b8c8f0" opacity="0.8"/><circle cx="13.8" cy="1" r="1.7" fill="#eef4ff" stroke="#50586c" stroke-width="0.9"/><path d="M11.5 4.5 Q11.5 3.2 13.8 3.2 Q16.1 3.2 16.1 4.5 V9.5 H15.4 V14.3 H14.200000000000001 V10.5 H13.4 V14.3 H12.200000000000001 V9.5 H11.5 Z" fill="#e4ecfc" stroke="#50586c" stroke-width="0.9"/><rect x="12.8" y="5" width="2" height="4" fill="#b8c8f0" opacity="0.8"/></svg><div class="t" style="left:313px;top:472px;font-weight:normal;color:#000;letter-spacing:0.584px;">Подсистемы</div><div class="t" style="left:456px;top:472px;font-weight:normal;color:#000;letter-spacing:0.724px;">Управление процессами сервера в группах подсистем</div><svg style="left:292px;top:470px" width="19" height="20" viewBox="-1 -2 19 20"><path d="M4.5 0.5 H12.500 L13.5 4.500 H3.5 Z" fill="#f8f8f8" stroke="#707478" stroke-width="0.9"/><rect x="2.500" y="4.5" width="12" height="5" rx="1" fill="#e8ece8" stroke="#707478" stroke-width="0.9"/><rect x="1.5" y="9.5" width="14" height="5" rx="1.5" fill="#dcd4f0" stroke="#707478" stroke-width="0.9"/><rect x="4" y="6" width="9" height="1" fill="#a8d8b8"/><rect x="3" y="11" width="11" height="2" fill="#c0b0e0"/><rect x="5" y="2" width="7" height="1" fill="#d0d0d0"/></svg><div class="t" style="left:313px;top:492px;font-weight:normal;color:#000;letter-spacing:0.506px;">Обзор</div><div class="t" style="left:456px;top:492px;font-weight:normal;color:#000;letter-spacing:0.878px;">null</div><svg style="left:292px;top:490px" width="19" height="20" viewBox="-1 -2 19 20"><g shape-rendering="crispEdges"><rect x="0" y="0" width="17" height="14" fill="#606468"/><rect x="1" y="1" width="15" height="12" fill="#acb0b4"/><rect x="2" y="2" width="13" height="1" fill="#70747c"/><rect x="3" y="4" width="11" height="1" fill="#f0f0f0"/><rect x="7" y="4" width="1" height="8" fill="#f0f0f0"/><rect x="3" y="6" width="3" height="3" fill="#606468"/><rect x="8" y="7" width="6" height="1" fill="#e0e0e0"/><rect x="3" y="10" width="4" height="1" fill="#e0e0e0"/><rect x="8" y="10" width="6" height="1" fill="#d0d0d0"/></g></svg><div class="t" style="left:313px;top:512px;font-weight:normal;color:#000;letter-spacing:0.426px;">Защита</div><div class="t" style="left:456px;top:512px;font-weight:normal;color:#000;letter-spacing:0.781px;">Управление защищенными соединениями клиент-сервер</div><svg style="left:292px;top:510px" width="19" height="20" viewBox="-1 -2 19 20"><circle cx="2.5" cy="1.8" r="1.7" fill="#fffce0" stroke="#585c48" stroke-width="0.9"/><path d="M3.8 2.8 L8.2 5.2 M5.5 4 L4.5 10.5" stroke="#585c48" stroke-width="2.2"/><path d="M3.8 2.8 L8.2 5.2 M5.5 4 L4.5 10.5" stroke="#f8f0a0" stroke-width="0.9"/><path d="M8.5 7 V5.5 Q8.500 3.500 11 3.5 Q13.500 3.500 13.5 5.5 V7" fill="none" stroke="#585c60" stroke-width="2.2"/><path d="M8.5 7 V5.5 Q8.5 3.5 11 3.5 Q13.5 3.5 13.5 5.5 V7" fill="none" stroke="#f4e890" stroke-width="0.9"/><path d="M6.5 6.5 H15.500 V11.500 L13 14.500 H9 L6.5 11.5 Z" fill="#f8c098" stroke="#484c50" stroke-width="0.9"/><rect x="10.3" y="8.5" width="1.5" height="3.5" fill="#202428"/><rect x="7.5" y="7.5" width="2" height="4" fill="#fde8d8" opacity="0.9"/></svg><div class="t" style="left:313px;top:532px;font-weight:normal;color:#000;letter-spacing:0.733px;">Администратор рабо...</div><div class="t" style="left:456px;top:532px;font-weight:normal;color:#000;letter-spacing:0.569px;">Распределение ресурсов системы между выполняющимися заданиями</div><svg style="left:292px;top:530px" width="19" height="20" viewBox="-1 -2 19 20"><circle cx="11.6" cy="3.8" r="4.3" fill="#fcfcfc" stroke="#505860" stroke-width="1.1"/><path d="M11.6 3.8 V1 M11.6 3.8 L13.6 5.2" stroke="#d82020" stroke-width="0.9" fill="none"/><circle cx="8.3" cy="5.2" r="0.9" fill="#30c0d8"/><g shape-rendering="crispEdges"><rect x="6" y="6" width="1" height="6" fill="#606468"/><rect x="5" y="8" width="5" height="1" fill="#606468"/><rect x="9" y="10" width="1" height="4" fill="#606468"/><rect x="0" y="4" width="7" height="4" fill="#606468"/><rect x="1" y="5" width="5" height="2" fill="#f8f4c8"/><rect x="1" y="6" width="5" height="1" fill="#c8dca0"/><rect x="3" y="8" width="7" height="4" fill="#606468"/><rect x="4" y="9" width="5" height="2" fill="#f8f4c8"/><rect x="4" y="10" width="5" height="1" fill="#c8dca0"/><rect x="7" y="11" width="7" height="4" fill="#606468"/><rect x="8" y="12" width="5" height="2" fill="#f8f4c8"/><rect x="8" y="13" width="5" height="1" fill="#c8dca0"/></g></svg><svg style="left:291px;top:638px" width="680" height="16" viewBox="291 638 680 16" ><defs>
<pattern id="dCy" width="2" height="2" patternUnits="userSpaceOnUse"><rect width="2" height="2" fill="#c4c8f0"/><rect width="1" height="1" fill="#2ce0ee"/><rect x="1" y="1" width="1" height="1" fill="#2ce0ee"/></pattern>
<pattern id="dGr" width="2" height="2" patternUnits="userSpaceOnUse"><rect width="2" height="2" fill="#a8a8a8"/><rect width="1" height="1" fill="#989898"/><rect x="1" y="1" width="1" height="1" fill="#989898"/></pattern>
<pattern id="dPe" width="2" height="2" patternUnits="userSpaceOnUse"><rect width="2" height="2" fill="#fde3cf"/><rect width="1" height="1" fill="#f8c49c"/><rect x="1" y="1" width="1" height="1" fill="#f8c49c"/></pattern>
<pattern id="dTh" width="4" height="4" patternUnits="userSpaceOnUse"><rect width="4" height="4" fill="#9399ca"/><rect x="0" y="0" width="1" height="1" fill="#ccccff"/><rect x="2" y="2" width="1" height="1" fill="#ccccff"/><rect x="1" y="1" width="1" height="1" fill="#6868a0"/><rect x="3" y="3" width="1" height="1" fill="#6868a0"/></pattern>
<pattern id="dFo" width="2" height="2" patternUnits="userSpaceOnUse"><rect width="2" height="2" fill="#f0e4b0"/><rect width="1" height="1" fill="#e0c878"/><rect x="1" y="1" width="1" height="1" fill="#e0c878"/></pattern>
</defs><g shape-rendering="crispEdges"><rect x="291" y="638" width="679" height="1" fill="#666"/><rect x="291" y="639" width="679" height="14" fill="#ccc"/><rect x="291" y="653" width="680" height="1" fill="#666"/><rect x="291" y="639" width="15" height="14" fill="#ccc"/><rect x="291" y="639" width="15" height="1" fill="#fff"/><rect x="291" y="639" width="1" height="14" fill="#fff"/><rect x="305" y="639" width="1" height="14" fill="#999"/><rect x="306" y="638" width="577" height="15" fill="#666699"/><rect x="307" y="639" width="575" height="14" fill="#ccccff"/><rect x="308" y="640" width="574" height="13" fill="#9399ca"/><rect x="309" y="641" width="572" height="11" fill="url(#dTh)"/><rect x="882" y="639" width="1" height="14" fill="#666699"/><rect x="955" y="639" width="15" height="14" fill="#ccc"/><rect x="954" y="639" width="1" height="14" fill="#909090"/><rect x="955" y="639" width="1" height="14" fill="#fff"/><rect x="955" y="639" width="15" height="1" fill="#fff"/><rect x="969" y="639" width="1" height="14" fill="#666"/></g><path d="M300 642 V651 L295.5 646.5 Z" fill="#000"/><path d="M961 642 V651 L965.5 646.5 Z" fill="#000"/></svg><div style="left:6px;top:656px;width:966px;height:1px;background:#999999;"></div><div style="left:6px;top:657px;width:967px;height:2px;background:#ffffff;"></div><div style="left:6px;top:659px;width:967px;height:23px;background:#c8c8c8;"></div><div style="left:6px;top:682px;width:967px;height:1px;background:#999999;"></div><div style="left:6px;top:657px;width:3px;height:25px;background:#ffffff;"></div><div style="left:969px;top:657px;width:3px;height:26px;background:#a0a0a0;"></div><div style="left:972px;top:656px;width:1px;height:27px;background:#ffffff;"></div><div style="left:9px;top:658px;width:21px;height:1px;background:#a4a4a4;"></div><div style="left:9px;top:659px;width:22px;height:23px;background:#ffffff;"></div><div style="left:9px;top:659px;width:21px;height:2px;background:#606060;"></div><div style="left:9px;top:659px;width:2px;height:21px;background:#606060;"></div><div style="left:11px;top:661px;width:18px;height:18px;background:#cccccc;"></div><div style="left:33px;top:658px;width:98px;height:1px;background:#a4a4a4;"></div><div style="left:33px;top:659px;width:99px;height:23px;background:#ffffff;"></div><div style="left:33px;top:659px;width:98px;height:2px;background:#606060;"></div><div style="left:33px;top:659px;width:2px;height:21px;background:#606060;"></div><div style="left:35px;top:661px;width:95px;height:18px;background:#cccccc;"></div><div style="left:134px;top:658px;width:276px;height:1px;background:#a4a4a4;"></div><div style="left:134px;top:659px;width:277px;height:23px;background:#ffffff;"></div><div style="left:134px;top:659px;width:276px;height:2px;background:#606060;"></div><div style="left:134px;top:659px;width:2px;height:21px;background:#606060;"></div><div style="left:136px;top:661px;width:273px;height:18px;background:#cccccc;"></div><div style="left:413px;top:658px;width:276px;height:1px;background:#a4a4a4;"></div><div style="left:413px;top:659px;width:277px;height:23px;background:#ffffff;"></div><div style="left:413px;top:659px;width:276px;height:2px;background:#606060;"></div><div style="left:413px;top:659px;width:2px;height:21px;background:#606060;"></div><div style="left:415px;top:661px;width:273px;height:18px;background:#cccccc;"></div><div style="left:692px;top:658px;width:276px;height:1px;background:#a4a4a4;"></div><div style="left:692px;top:659px;width:277px;height:23px;background:#ffffff;"></div><div style="left:692px;top:659px;width:276px;height:2px;background:#606060;"></div><div style="left:692px;top:659px;width:2px;height:21px;background:#606060;"></div><div style="left:694px;top:661px;width:273px;height:18px;background:#cccccc;"></div><svg style="left:10px;top:660px" width="20" height="20" viewBox="10 660 20 20" ><path d="M19.5 668.5 V664.5 Q19.5 662.5 21.5 662.5 H24 Q26 662.5 26 664.5 V668.5" fill="none" stroke="#ffee40" stroke-width="3.4"/><path d="M19.5 668.5 V664.5 Q19.5 662.5 21.5 662.5 H24 Q26 662.5 26 664.5 V668.5" fill="none" stroke="#484c58" stroke-width="1.6"/><path d="M20.3 668 V665 Q20.3 663.4 21.8 663.4 H23.6" fill="none" stroke="#fff" stroke-width="0.9"/><path d="M13.5 667.5 H22.5 V674 L19.5 677.5 H16 L12.5 674 V668.5 Z" fill="#fff8ec" stroke="#ffee40" stroke-width="2.6" stroke-linejoin="round"/><path d="M13.5 667.5 H22.5 V674 L19.5 677.5 H16 L12.5 674 V668.5 Z" fill="#fff8ec" stroke="#40444c" stroke-width="0.9"/><rect x="19" y="671" width="3" height="4" fill="#f8c8b0" opacity="0.8"/><rect x="14" y="672" width="2" height="4" fill="#f8c080" opacity="0.8"/><rect x="16.8" y="670.6" width="1.6" height="4.6" fill="#000"/><rect x="16" y="676" width="1" height="1" fill="#f8b000"/><rect x="18" y="676" width="1" height="1" fill="#f8b000"/></svg><div class="t" style="left:35px;top:663px;font-weight:bold;color:#000;letter-spacing:0.726px;">Готово</div><div class="t" style="left:136px;top:663px;font-weight:bold;color:#000;letter-spacing:0.583px;">Показано 16 объектов, скрыто - 0.</div><div class="t" style="left:415px;top:663px;font-weight:bold;color:#000;letter-spacing:0.404px;">Выбрано 0 объектов.</div><div class="t" style="left:694px;top:663px;font-weight:bold;color:#000;letter-spacing:1.039px;">root - karnak</div>
</div></body></html>
